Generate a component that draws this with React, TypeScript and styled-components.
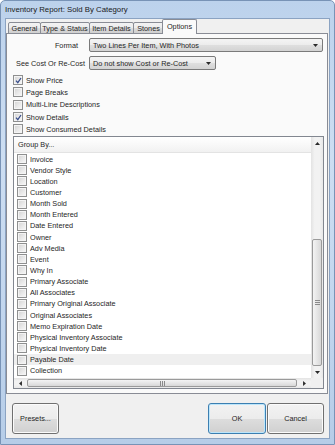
import styled, { createGlobalStyle } from "styled-components";

const GlobalStyle = createGlobalStyle`
  html, body {
    margin: 0;
    padding: 0;
    background: #ffffff;
  }
  body {
    font-family: "Liberation Sans", Arial, sans-serif;
    color: #262626;
  }
`;

const Window = styled.div`
  width: 335px;
  height: 445px;
  box-sizing: border-box;
  border: 1px solid #7893b6;
  border-radius: 5px 5px 0 0;
  background: linear-gradient(180deg, #bcd2ec 0%, #cddef2 35%, #c2d6ee 70%, #b6cde8 100%);
  padding: 0 4px 5px 4px;
  display: flex;
  flex-direction: column;
`;

const TitleBar = styled.div`
  height: 17px;
  display: flex;
  align-items: center;
  font-size: 7.8px;
  color: #1a1a1a;
`;

const Client = styled.div`
  flex: 1;
  display: flex;
  flex-direction: column;
  background: #f0f0f0;
  border: 1px solid #8ba3c2;
`;

const TabStrip = styled.div`
  height: 15px;
  display: flex;
  align-items: flex-end;
  padding-left: 2px;
  margin-bottom: -1px;
  position: relative;
  z-index: 1;
`;

const Tab = styled.div<{ $w: number; $active?: boolean }>`
  width: ${(p) => p.$w}px;
  height: ${(p) => (p.$active ? 15 : 12)}px;
  box-sizing: border-box;
  margin-left: ${(p) => (p.$active ? -1 : 0)}px;
  margin-right: -1px;
  border: 1px solid #898c95;
  border-bottom: ${(p) => (p.$active ? "none" : "1px solid #898c95")};
  border-radius: 2px 2px 0 0;
  background: ${(p) =>
    p.$active ? "#fafafa" : "linear-gradient(180deg, #f3f3f3 0%, #ebebeb 50%, #dddddd 51%, #cfcfcf 100%)"};
  font-size: 7.3px;
  white-space: nowrap;
  display: flex;
  align-items: center;
  justify-content: center;
  padding-bottom: ${(p) => (p.$active ? 2 : 0)}px;
  position: relative;
  z-index: ${(p) => (p.$active ? 2 : 1)};
`;

const TabPanel = styled.div`
  height: 361px;
  box-sizing: border-box;
  margin-right: 1px;
  border: 1px solid #898c95;
  background: #fafafa;
  padding: 4px 3px 4px 6px;
  display: flex;
  flex-direction: column;
`;

const FieldRow = styled.div`
  display: grid;
  grid-template-columns: 76px auto;
  align-items: center;
  height: 14px;
  margin-bottom: 4px;
`;

const FieldLabel = styled.div<{ $pad: number }>`
  font-size: 7.3px;
  white-space: nowrap;
  text-align: right;
  padding-right: ${(p) => p.$pad}px;
`;

const Combo = styled.div<{ $w: number }>`
  width: ${(p) => p.$w}px;
  height: 14px;
  box-sizing: border-box;
  border: 1px solid #7a7a7a;
  border-radius: 2px;
  background: linear-gradient(180deg, #f4f4f4 0%, #ececec 50%, #dfdfdf 51%, #d3d3d3 100%);
  font-size: 7.3px;
  white-space: nowrap;
  display: flex;
  align-items: center;
  justify-content: space-between;
  padding: 0 4px 0 3px;
`;

const CheckRow = styled.div`
  height: 12.3px;
  display: flex;
  align-items: center;
  gap: 3px;
  font-size: 7.3px;
  white-space: nowrap;
`;

const Box = styled.span`
  width: 10px;
  height: 10px;
  box-sizing: border-box;
  border: 1px solid #8e8f8f;
  background: linear-gradient(135deg, #d2d2d2 0%, #e9e9e9 55%, #f8f8f8 100%);
  box-shadow: inset 0 0 0 1px #f4f4f4;
  display: flex;
  align-items: center;
  justify-content: center;
  flex-shrink: 0;
`;

const ListBox = styled.div`
  flex: 1;
  margin-top: 1px;
  border: 1px solid #828790;
  background: #ffffff;
  display: grid;
  grid-template-columns: 1fr 12px;
  grid-template-rows: 1fr 10px;
  min-height: 0;
`;

const ListBody = styled.div`
  overflow: hidden;
  display: flex;
  flex-direction: column;
`;

const ListHeader = styled.div`
  height: 16px;
  flex-shrink: 0;
  box-sizing: border-box;
  border-bottom: 1px solid #e3e3e3;
  background: linear-gradient(180deg, #ffffff 0%, #f7f7f7 60%, #f1f1f1 100%);
  padding-left: 4px;
  display: flex;
  align-items: center;
  font-size: 7.3px;
`;

const ItemRow = styled.div<{ $hl?: boolean }>`
  height: 11.15px;
  flex-shrink: 0;
  display: flex;
  align-items: center;
  gap: 3px;
  padding-left: 3px;
  font-size: 7.3px;
  white-space: nowrap;
  background: ${(p) => (p.$hl ? "#efefef" : "transparent")};
`;

const VScroll = styled.div`
  background: linear-gradient(90deg, #e3e3e3 0%, #f2f2f2 30%, #f2f2f2 70%, #e8e8e8 100%);
  display: flex;
  flex-direction: column;
`;

const ArrowBtn = styled.div<{ $w?: number; $h?: number }>`
  width: ${(p) => (p.$w ? `${p.$w}px` : "auto")};
  height: ${(p) => (p.$h ? `${p.$h}px` : "auto")};
  flex-shrink: 0;
  display: flex;
  align-items: center;
  justify-content: center;
`;

const VTrack = styled.div`
  flex: 1;
  display: flex;
  flex-direction: column;
  justify-content: flex-end;
`;

const Thumb = styled.div<{ $vertical?: boolean }>`
  box-sizing: border-box;
  border: 1px solid #9a9a9a;
  border-radius: 2px;
  background: ${(p) =>
    p.$vertical
      ? "linear-gradient(90deg, #f4f4f4 0%, #e6e6e6 50%, #d8d8d8 100%)"
      : "linear-gradient(180deg, #f4f4f4 0%, #e6e6e6 50%, #d8d8d8 100%)"};
  display: flex;
  align-items: center;
  justify-content: center;
  height: ${(p) => (p.$vertical ? "127px" : "auto")};
  margin: ${(p) => (p.$vertical ? "0 1px" : "1px 0")};
  flex: ${(p) => (p.$vertical ? "none" : "1")};
`;

const HScroll = styled.div`
  background: linear-gradient(180deg, #e3e3e3 0%, #f2f2f2 30%, #f2f2f2 70%, #e8e8e8 100%);
  display: flex;
`;

const Corner = styled.div`
  background: #f0f0f0;
`;

const Footer = styled.div`
  flex: 1;
  display: flex;
  align-items: flex-start;
  gap: 1px;
  padding: 9px 5px 0 6px;
`;

const Button = styled.div<{ $w: number; $default?: boolean; $push?: boolean }>`
  width: ${(p) => p.$w}px;
  height: 31px;
  box-sizing: border-box;
  margin-left: ${(p) => (p.$push ? "auto" : "0")};
  border: 1px solid ${(p) => (p.$default ? "#3c7fb1" : "#707070")};
  border-radius: 3px;
  background: linear-gradient(180deg, #f3f3f3 0%, #ececec 50%, #dddddd 51%, #d0d0d0 100%);
  box-shadow: ${(p) => (p.$default ? "inset 0 0 0 1px #bde6fb" : "inset 0 0 0 1px #fbfbfb")};
  font-size: 7.3px;
  display: flex;
  align-items: center;
  justify-content: center;
`;

function Check({ on }: { on?: boolean }) {
  return (
    <Box>
      {on && (
        <svg width="7" height="7" viewBox="0 0 7 7">
          <path d="M1 3.6 L2.8 5.6 L6 1" fill="none" stroke="#3a4f8c" strokeWidth="1.3" />
        </svg>
      )}
    </Box>
  );
}

function Tri({ dir }: { dir: "up" | "down" | "left" | "right" }) {
  const pts = {
    up: "0,4 3.5,0 7,4",
    down: "0,0 7,0 3.5,4",
    left: "4,0 4,7 0,3.5",
    right: "0,0 0,7 4,3.5",
  }[dir];
  const vert = dir === "up" || dir === "down";
  return (
    <svg width={vert ? 5 : 3} height={vert ? 3 : 5} viewBox={vert ? "0 0 7 4" : "0 0 4 7"}>
      <polygon points={pts} fill="#2a2a2a" />
    </svg>
  );
}

function Grip({ vertical }: { vertical?: boolean }) {
  return vertical ? (
    <svg width="5" height="5" viewBox="0 0 5 5">
      <path d="M0 0.5H5M0 2.5H5M0 4.5H5" stroke="#8a8a8a" strokeWidth="1" />
    </svg>
  ) : (
    <svg width="5" height="5" viewBox="0 0 5 5">
      <path d="M0.5 0V5M2.5 0V5M4.5 0V5" stroke="#8a8a8a" strokeWidth="1" />
    </svg>
  );
}

const groups = [
  "Invoice",
  "Vendor Style",
  "Location",
  "Customer",
  "Month Sold",
  "Month Entered",
  "Date Entered",
  "Owner",
  "Adv Media",
  "Event",
  "Why In",
  "Primary Associate",
  "All Associates",
  "Primary Original Associate",
  "Original Associates",
  "Memo Expiration Date",
  "Physical Inventory Associate",
  "Physical Inventory Date",
  "Payable Date",
  "Collection",
];

const options = [
  { label: "Show Price", on: true },
  { label: "Page Breaks", on: false },
  { label: "Multi-Line Descriptions", on: false },
  { label: "Show Details", on: true },
  { label: "Show Consumed Details", on: false },
];

const tabs = [
  { name: "General", w: 33 },
  { name: "Type & Status", w: 50 },
  { name: "Item Details", w: 45 },
  { name: "Stones", w: 31 },
  { name: "Options", w: 35, active: true },
];

export default function App() {
  return (
    <>
      <GlobalStyle />
      <Window>
        <TitleBar>Inventory Report: Sold By Category</TitleBar>
        <Client>
          <TabStrip>
            {tabs.map((t) => (
              <Tab key={t.name} $w={t.w} $active={t.active}>
                {t.name}
              </Tab>
            ))}
          </TabStrip>
          <TabPanel>
            <FieldRow>
              <FieldLabel $pad={11}>Format</FieldLabel>
              <Combo $w={234}>
                <span>Two Lines Per Item, With Photos</span>
                <Tri dir="down" />
              </Combo>
            </FieldRow>
            <FieldRow>
              <FieldLabel $pad={4}>See Cost Or Re-Cost</FieldLabel>
              <Combo $w={127}>
                <span>Do not show Cost or Re-Cost</span>
                <Tri dir="down" />
              </Combo>
            </FieldRow>
            {options.map((o) => (
              <CheckRow key={o.label}>
                <Check on={o.on} />
                <span>{o.label}</span>
              </CheckRow>
            ))}
            <ListBox>
              <ListBody>
                <ListHeader>Group By...</ListHeader>
                {groups.map((g) => (
                  <ItemRow key={g} $hl={g === "Payable Date"}>
                    <Check />
                    <span>{g}</span>
                  </ItemRow>
                ))}
              </ListBody>
              <VScroll>
                <ArrowBtn $h={12}>
                  <Tri dir="up" />
                </ArrowBtn>
                <VTrack>
                  <Thumb $vertical>
                    <Grip vertical />
                  </Thumb>
                </VTrack>
                <ArrowBtn $h={12}>
                  <Tri dir="down" />
                </ArrowBtn>
              </VScroll>
              <HScroll>
                <ArrowBtn $w={13}>
                  <Tri dir="left" />
                </ArrowBtn>
                <Thumb>
                  <Grip />
                </Thumb>
                <ArrowBtn $w={14}>
                  <Tri dir="right" />
                </ArrowBtn>
              </HScroll>
              <Corner />
            </ListBox>
          </TabPanel>
          <Footer>
            <Button $w={47}>Presets...</Button>
            <Button $w={58} $default $push>
              OK
            </Button>
            <Button $w={57}>Cancel</Button>
          </Footer>
        </Client>
      </Window>
    </>
  );
}
